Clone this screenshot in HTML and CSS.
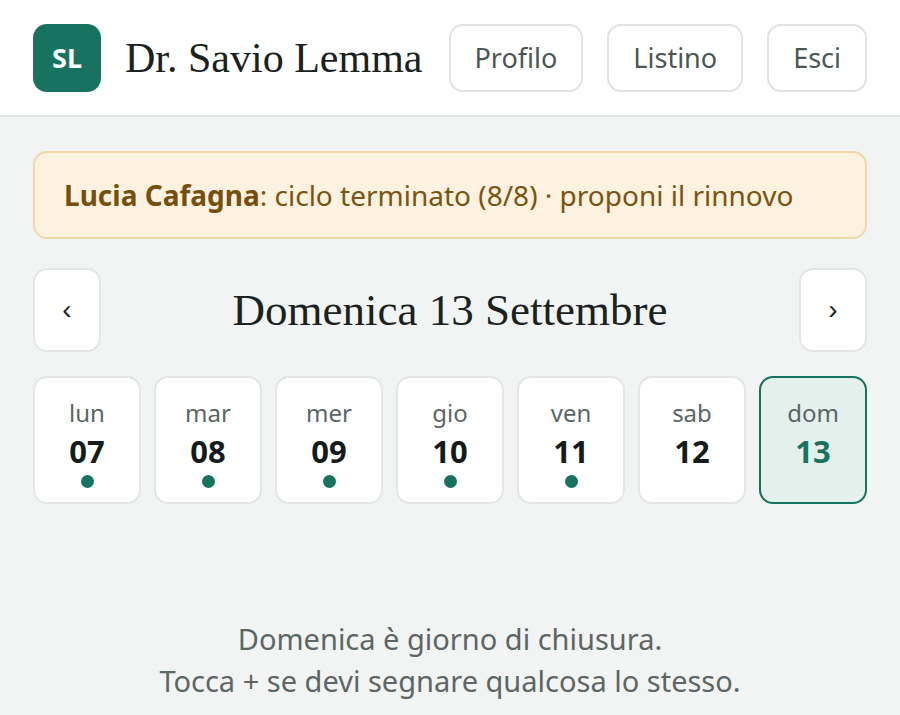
FILE: index.html
```html
<!DOCTYPE html>
<html lang="it">
<head>
    <meta charset="UTF-8">
    <meta name="viewport" content="width=device-width, initial-scale=1.0">
    <title>Agenda - Dr. Savio Lemma</title>
    <link rel="stylesheet" href="styles.css">
</head>
<body>
    <header class="topbar">
        <div class="brand">
            <div class="avatar">SL</div>
            <h1 class="doctor">Dr. Savio Lemma</h1>
        </div>
        <nav class="actions">
            <button class="btn">Profilo</button>
            <button class="btn">Listino</button>
            <button class="btn">Esci</button>
        </nav>
    </header>

    <main class="content">
        <div class="alert">
            <p><strong>Lucia Cafagna</strong>: ciclo terminato (8/8) · proponi il rinnovo</p>
        </div>

        <div class="day-nav">
            <button class="nav-btn">&lsaquo;</button>
            <h2 class="day-title">Domenica 13 Settembre</h2>
            <button class="nav-btn">&rsaquo;</button>
        </div>

        <div class="week">
            <div class="day">
                <span class="day-name">lun</span>
                <span class="day-num">07</span>
                <span class="dot"></span>
            </div>
            <div class="day">
                <span class="day-name">mar</span>
                <span class="day-num">08</span>
                <span class="dot"></span>
            </div>
            <div class="day">
                <span class="day-name">mer</span>
                <span class="day-num">09</span>
                <span class="dot"></span>
            </div>
            <div class="day">
                <span class="day-name">gio</span>
                <span class="day-num">10</span>
                <span class="dot"></span>
            </div>
            <div class="day">
                <span class="day-name">ven</span>
                <span class="day-num">11</span>
                <span class="dot"></span>
            </div>
            <div class="day">
                <span class="day-name">sab</span>
                <span class="day-num">12</span>
            </div>
            <div class="day selected">
                <span class="day-name">dom</span>
                <span class="day-num">13</span>
            </div>
        </div>

        <p class="closed">
            Domenica è giorno di chiusura.<br>
            Tocca + se devi segnare qualcosa lo stesso.
        </p>
    </main>
</body>
</html>
```

FILE: styles.css
```css
body {
    font-family: "Noto Sans", "Open Sans", sans-serif;
    margin: 0;
    background-color: #f2f4f3;
    color: #1c2423;
}

.topbar {
    display: flex;
    align-items: center;
    justify-content: space-between;
    height: 115px;
    padding: 0 33px;
    background-color: #fff;
    border-bottom: 2px solid #e2e6e5;
}

.brand {
    display: flex;
    align-items: center;
    gap: 24px;
}

.avatar {
    width: 68px;
    height: 68px;
    border-radius: 14px;
    background-color: #17735f;
    color: #fff;
    font-weight: bold;
    font-size: 27px;
    display: flex;
    align-items: center;
    justify-content: center;
}

.doctor,
.day-title {
    font-family: "Liberation Serif", serif;
    font-weight: normal;
    font-size: 42px;
    margin: 0;
    color: #1a2221;
}

.actions {
    display: flex;
    gap: 24px;
}

.btn {
    font-family: inherit;
    font-size: 27px;
    color: #4b5654;
    background-color: #fff;
    border: 2px solid #dfe3e2;
    border-radius: 14px;
    height: 68px;
    padding: 0 24px;
    cursor: pointer;
}

.content {
    padding: 34px 33px 0;
}

.alert {
    background-color: #fdf2e0;
    border: 2px solid #efd9a9;
    border-radius: 14px;
    padding: 0 29px;
    height: 88px;
    box-sizing: border-box;
    display: flex;
    align-items: center;
    font-size: 28px;
    color: #7a5410;
}

.alert p {
    margin: 0;
}

.alert strong {
    color: #75500c;
}

.day-nav {
    display: flex;
    align-items: center;
    justify-content: space-between;
    margin-top: 29px;
}

.day-title {
    font-size: 45px;
}

.nav-btn {
    width: 68px;
    height: 84px;
    background-color: #fff;
    border: 2px solid #e2e6e5;
    border-radius: 14px;
    font-size: 28px;
    color: #1a2221;
    cursor: pointer;
}

.week {
    display: grid;
    grid-template-columns: repeat(7, 1fr);
    gap: 13px;
    margin-top: 24px;
}

.day {
    height: 128px;
    background-color: #fff;
    border: 2px solid #e2e6e5;
    border-radius: 14px;
    display: flex;
    flex-direction: column;
    align-items: center;
    padding-top: 18px;
    box-sizing: border-box;
}

.day-name {
    font-size: 24px;
    color: #5b6664;
    line-height: 34px;
}

.day-num {
    font-size: 31px;
    font-weight: bold;
    color: #141c1b;
    line-height: 42px;
}

.dot {
    width: 13px;
    height: 13px;
    border-radius: 50%;
    background-color: #17735f;
    margin-top: 3px;
}

.selected {
    background-color: #e4f0ec;
    border-color: #17735f;
}

.selected .day-num {
    color: #17735f;
}

.closed {
    text-align: center;
    font-size: 29px;
    line-height: 42px;
    color: #5c6664;
    margin: 114px 0 0;
}
```
